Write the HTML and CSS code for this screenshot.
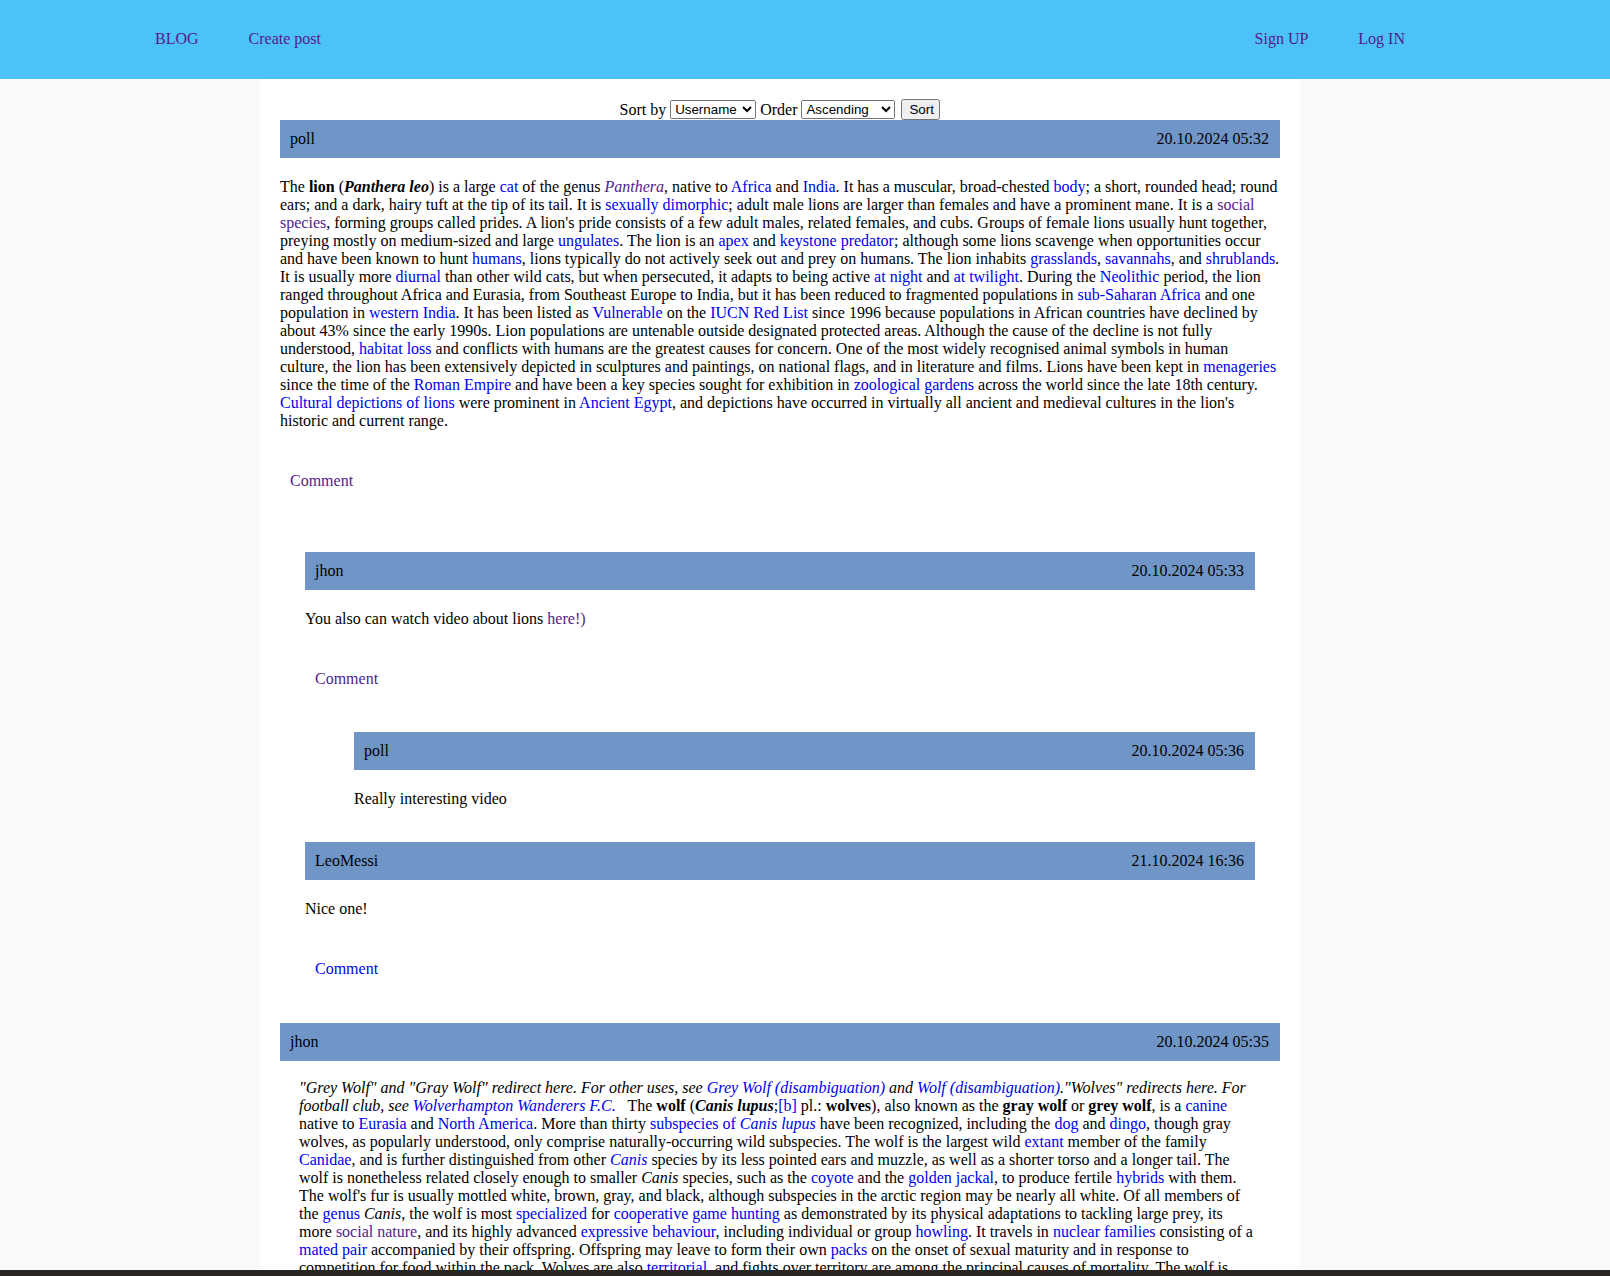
FILE: index.html
```html
<!DOCTYPE html>
<html lang="en">
<head>
<meta charset="utf-8">
<title>BLOG</title>
<link rel="stylesheet" href="styles.css">
</head>
<body>
<header class="topbar">
  <nav class="nav">
    <div class="nav-group">
      <a class="visited" href="#">BLOG</a>
      <a class="visited" href="#">Create post</a>
    </div>
    <div class="nav-group">
      <a class="visited" href="#">Sign UP</a>
      <a class="visited" href="#">Log IN</a>
    </div>
  </nav>
</header>
<div class="page">
  <main class="container">
    <form class="sort">Sort by <select class="sel-user"><option>Username</option><option>Date</option></select> Order <select class="sel-order"><option>Ascending</option><option>Descending</option></select> <button type="button">Sort</button></form>

    <article class="post">
      <div class="bar"><span>poll</span><span>20.10.2024 05:32</span></div>
      <div class="body">The <b>lion</b> (<b><i>Panthera leo</i></b>) is a large <a href="#">cat</a> of the genus <a class="visited" href="#"><i>Panthera</i></a>, native to <a href="#">Africa</a> and <a href="#">India</a>. It has a muscular, broad-chested <a href="#">body</a>; a short, rounded head; round ears; and a dark, hairy tuft at the tip of its tail. It is <a href="#">sexually dimorphic</a>; adult male lions are larger than females and have a prominent mane. It is a <a class="visited" href="#">social species</a>, forming groups called prides. A lion's pride consists of a few adult males, related females, and cubs. Groups of female lions usually hunt together, preying mostly on medium-sized and large <a href="#">ungulates</a>. The lion is an <a href="#">apex</a> and <a href="#">keystone predator</a>; although some lions scavenge when opportunities occur and have been known to hunt <a href="#">humans</a>, lions typically do not actively seek out and prey on humans. The lion inhabits <a href="#">grasslands</a>, <a href="#">savannahs</a>, and <a href="#">shrublands</a>. It is usually more <a href="#">diurnal</a> than other wild cats, but when persecuted, it adapts to being active <a href="#">at night</a> and <a href="#">at twilight</a>. During the <a href="#">Neolithic</a> period, the lion ranged throughout Africa and Eurasia, from Southeast Europe to India, but it has been reduced to fragmented populations in <a href="#">sub-Saharan Africa</a> and one population in <a href="#">western India</a>. It has been listed as <a href="#">Vulnerable</a> on the <a href="#">IUCN Red List</a> since 1996 because populations in African countries have declined by about 43% since the early 1990s. Lion populations are untenable outside designated protected areas. Although the cause of the decline is not fully understood, <a href="#">habitat loss</a> and conflicts with humans are the greatest causes for concern. One of the most widely recognised animal symbols in human culture, the lion has been extensively depicted in sculptures and paintings, on national flags, and in literature and films. Lions have been kept in <a href="#">menageries</a> since the time of the <a href="#">Roman Empire</a> and have been a key species sought for exhibition in <a href="#">zoological gardens</a> across the world since the late 18th century. <a href="#">Cultural depictions of lions</a> were prominent in <a href="#">Ancient Egypt</a>, and depictions have occurred in virtually all ancient and medieval cultures in the lion's historic and current range.</div>
      <a class="reply visited" href="#">Comment</a>

      <div class="comments">
        <div class="comment">
          <div class="bar"><span>jhon</span><span>20.10.2024 05:33</span></div>
          <div class="body">You also can watch video about lions <a class="visited" href="#">here!)</a></div>
          <a class="reply visited" href="#">Comment</a>
          <div class="children">
            <div class="comment">
              <div class="bar"><span>poll</span><span>20.10.2024 05:36</span></div>
              <div class="body">Really interesting video</div>
            </div>
          </div>
        </div>
        <div class="comment">
          <div class="bar"><span>LeoMessi</span><span>21.10.2024 16:36</span></div>
          <div class="body">Nice one!</div>
          <a class="reply" href="#">Comment</a>
        </div>
      </div>
    </article>

    <article class="post">
      <div class="bar"><span>jhon</span><span>20.10.2024 05:35</span></div>
      <div class="body inset"><i>"Grey Wolf" and "Gray Wolf" redirect here. For other uses, see <a href="#">Grey Wolf (disambiguation)</a> and <a href="#">Wolf (disambiguation)</a>."Wolves" redirects here. For football club, see <a href="#">Wolverhampton Wanderers F.C.</a></i>&nbsp;&nbsp; The <b>wolf</b> (<b><i>Canis lupus</i></b>;<a href="#">[b]</a> pl.: <b>wolves</b>), also known as the <b>gray wolf</b> or <b>grey wolf</b>, is a <a href="#">canine</a> native to <a href="#">Eurasia</a> and <a href="#">North America</a>. More than thirty <a href="#">subspecies of <i>Canis lupus</i></a> have been recognized, including the <a href="#">dog</a> and <a href="#">dingo</a>, though gray wolves, as popularly understood, only comprise naturally-occurring wild subspecies. The wolf is the largest wild <a href="#">extant</a> member of the family <a href="#">Canidae</a>, and is further distinguished from other <a href="#"><i>Canis</i></a> species by its less pointed ears and muzzle, as well as a shorter torso and a longer tail. The wolf is nonetheless related closely enough to smaller <i>Canis</i> species, such as the <a href="#">coyote</a> and the <a href="#">golden jackal</a>, to produce fertile <a href="#">hybrids</a> with them. The wolf's fur is usually mottled white, brown, gray, and black, although subspecies in the arctic region may be nearly all white. Of all members of the <a href="#">genus</a> <i>Canis</i>, the wolf is most <a href="#">specialized</a> for <a href="#">cooperative game hunting</a> as demonstrated by its physical adaptations to tackling large prey, its more <a class="visited" href="#">social nature</a>, and its highly advanced <a href="#">expressive behaviour</a>, including individual or group <a href="#">howling</a>. It travels in <a href="#">nuclear families</a> consisting of a <a href="#">mated pair</a> accompanied by their offspring. Offspring may leave to form their own <a href="#">packs</a> on the onset of sexual maturity and in response to competition for food within the pack. Wolves are also <a href="#">territorial</a>, and fights over territory are among the principal causes of mortality. The wolf is mainly a <a href="#">carnivore</a> and feeds on large wild <a href="#">hooved mammals</a> as well as smaller animals, livestock, carrion, and garbage.</div>
      <a class="reply" href="#">Comment</a>
    </article>
  </main>
</div>
<div class="taskbar"></div>
</body>
</html>
```

FILE: styles.css
```css
html, body {
  margin: 0;
  padding: 0;
}
body {
  background: #f9f9f9;
  font-family: "Liberation Serif", "Times New Roman", serif;
  font-size: 16px;
  line-height: 18px;
  color: #000;
}
a {
  color: #0000ee;
  text-decoration: none;
}
a.visited {
  color: #551a8b;
}

.topbar {
  background: #4bc2f8;
  height: 79px;
}
.nav {
  width: 1250px;
  margin-left: 155px;
  height: 77px;
  display: flex;
  align-items: center;
  justify-content: space-between;
}
.nav-group {
  display: flex;
  gap: 50px;
}

.page {
  width: 1560px;
}
.container {
  width: 1000px;
  margin: 0 auto;
  padding: 20px 20px 40px;
  background: #fff;
  min-height: 1200px;
}

.sort {
  margin: 0;
  height: 21px;
  text-align: center;
  line-height: 21px;
}
.sort select,
.sort button {
  vertical-align: top;
  margin-top: 1px;
  height: 19px;
  box-sizing: border-box;
}
.sort .sel-user {
  width: 86px;
}
.sort .sel-order {
  width: 94px;
}
.sort button {
  width: 39px;
  height: 21px;
  margin-top: 0;
  margin-left: 2px;
  padding: 0 6px;
}

.bar {
  background: #7096c8;
  height: 38px;
  padding: 0 11px 0 10px;
  display: flex;
  align-items: center;
  justify-content: space-between;
}
.body {
  margin-top: 20px;
}
.body.inset {
  margin-top: 18px;
  padding: 0 25px 0 19px;
}
.reply {
  display: block;
  width: fit-content;
  margin: 42px 0 0 10px;
}

.post + .post {
  margin-top: 45px;
}
.comments {
  margin: 62px 25px 0;
}
.comment + .comment {
  margin-top: 34px;
}
.children {
  margin: 44px 0 0 49px;
}

.taskbar {
  position: fixed;
  left: 0;
  right: 0;
  bottom: 0;
  height: 6px;
  background: #2b2522;
}
```
